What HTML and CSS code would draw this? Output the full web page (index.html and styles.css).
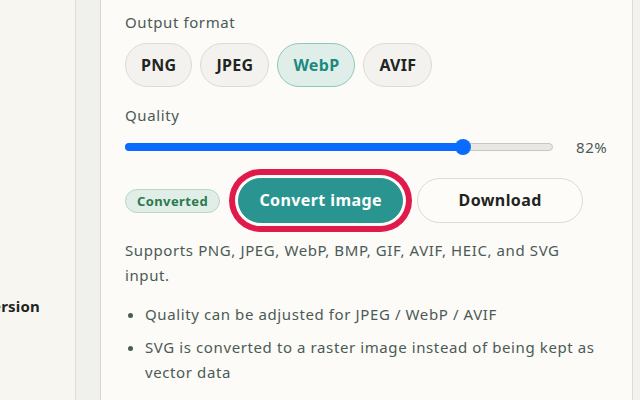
FILE: index.html
```html
<!DOCTYPE html>
<html lang="en">
<head>
    <meta charset="UTF-8">
    <meta name="viewport" content="width=device-width, initial-scale=1.0">
    <title>Image Converter</title>
    <link rel="stylesheet" href="styles.css">
</head>
<body>
    <div class="layout">
        <!-- Sidebar (scrolled partly out of view) -->
        <aside class="sidebar">
            <div class="sidebar-title">Format conversion</div>
        </aside>
        <div class="rail"></div>

        <!-- Converter panel -->
        <main class="panel">
            <div class="field-label">Output format</div>
            <div class="chips">
                <button class="chip">PNG</button>
                <button class="chip">JPEG</button>
                <button class="chip active">WebP</button>
                <button class="chip">AVIF</button>
            </div>

            <div class="field-label quality-label">Quality</div>
            <div class="slider-row">
                <div class="slider">
                    <div class="slider-fill" style="width: 79%;"></div>
                    <div class="slider-thumb" style="left: 79%;"></div>
                </div>
                <span class="slider-value">82%</span>
            </div>

            <div class="actions">
                <span class="badge">Converted</span>
                <button class="btn btn-primary">Convert image</button>
                <button class="btn btn-secondary">Download</button>
            </div>

            <p class="note">Supports PNG, JPEG, WebP, BMP, GIF, AVIF, HEIC, and SVG input.</p>
            <ul class="notes">
                <li>Quality can be adjusted for JPEG / WebP / AVIF</li>
                <li>SVG is converted to a raster image instead of being kept as vector data</li>
            </ul>
        </main>
        <div class="edge"></div>
    </div>
</body>
</html>
```

FILE: styles.css
```css
body {
  margin: 0;
  padding: 0;
  font-family: "Noto Sans", "Noto Sans CJK JP", sans-serif;
  letter-spacing: 0.6px;
  background-color: #f8f6f0;
  color: #1f2523;
  overflow: hidden;
}

.layout {
  display: flex;
  height: 400px;
}

/* Sidebar */
.sidebar {
  width: 75px;
  flex-shrink: 0;
  overflow: hidden;
  display: flex;
  justify-content: flex-end;
  align-items: flex-start;
  padding-right: 35px;
  box-sizing: border-box;
}

.sidebar-title {
  white-space: nowrap;
  margin-top: 295px;
  font-size: 15px;
  font-weight: 700;
  line-height: 22px;
  letter-spacing: 0.2px;
}

.rail {
  width: 24px;
  flex-shrink: 0;
  background-color: #f0f0ec;
  border-left: 1px solid #dedcd5;
  border-right: 1px solid #d6d5cf;
}

/* Panel */
.panel {
  flex: 1;
  background-color: #fcfbf7;
  border-right: 1px solid #dcdbd5;
  padding: 11px 24px 0 24px;
}

.edge {
  width: 7px;
  flex-shrink: 0;
  background-color: #f3f2ee;
}

.field-label {
  font-size: 15px;
  line-height: 22px;
  color: #4b5a56;
}

.chips {
  display: flex;
  gap: 8px;
  margin-top: 10px;
}

.chip {
  font-family: inherit;
  font-size: 16px;
  font-weight: 700;
  line-height: 22px;
  letter-spacing: 0.3px;
  color: #1f2523;
  background-color: #f3f2ee;
  border: 1px solid #dcdbd5;
  border-radius: 999px;
  padding: 10px 15px;
  cursor: pointer;
}

.chip.active {
  background-color: #e0eee9;
  border-color: #8ec9bf;
  color: #1b8a80;
}

.quality-label {
  margin-top: 17px;
}

.slider-row {
  display: flex;
  align-items: center;
  gap: 23px;
  margin-top: 13px;
  height: 16px;
}

.slider {
  position: relative;
  flex: 1;
  height: 6px;
  background-color: #e7e7e3;
  border: 1px solid #c8c8c3;
  border-radius: 4px;
}

.slider-fill {
  position: absolute;
  left: -1px;
  top: -1px;
  bottom: -1px;
  background-color: #0a6cff;
  border-radius: 4px 0 0 4px;
}

.slider-thumb {
  position: absolute;
  top: 50%;
  width: 16px;
  height: 16px;
  margin: -8px 0 0 -8px;
  background-color: #0a6cff;
  border-radius: 50%;
}

.slider-value {
  font-size: 15px;
  color: #4b5a56;
  width: 32px;
  white-space: nowrap;
}

/* Actions */
.actions {
  display: flex;
  align-items: center;
  margin-top: 23px;
}

.badge {
  font-size: 13px;
  font-weight: 700;
  line-height: 20px;
  letter-spacing: 0.4px;
  color: #2a7a4e;
  background-color: #e0eee7;
  border: 1px solid #b6d8c8;
  border-radius: 999px;
  padding: 1px 11px;
}

.btn {
  font-family: inherit;
  font-size: 16px;
  font-weight: 700;
  line-height: 21px;
  letter-spacing: 0.4px;
  height: 45px;
  border-radius: 999px;
  padding: 0 20px;
  cursor: pointer;
}

.btn-primary {
  width: 165px;
  margin-left: 18px;
  color: #fff;
  background-color: #2a9590;
  border: 1px solid #2a9590;
  box-shadow: 0 0 0 3px #fcfbf7, 0 0 0 9px #e01a4b;
}

.btn-secondary {
  width: 166px;
  margin-left: 14px;
  color: #1f2523;
  background-color: #fdfcf9;
  border: 1px solid #dcdbd5;
}

/* Notes */
.note {
  margin: 15px 0 0 0;
  font-size: 15px;
  line-height: 25px;
  color: #4b5a56;
  max-width: 470px;
}

.notes {
  margin: 14px 0 0 0;
  padding-left: 20px;
  font-size: 15px;
  line-height: 25px;
  color: #4b5a56;
}

.notes li {
  margin-bottom: 8px;
}
```
